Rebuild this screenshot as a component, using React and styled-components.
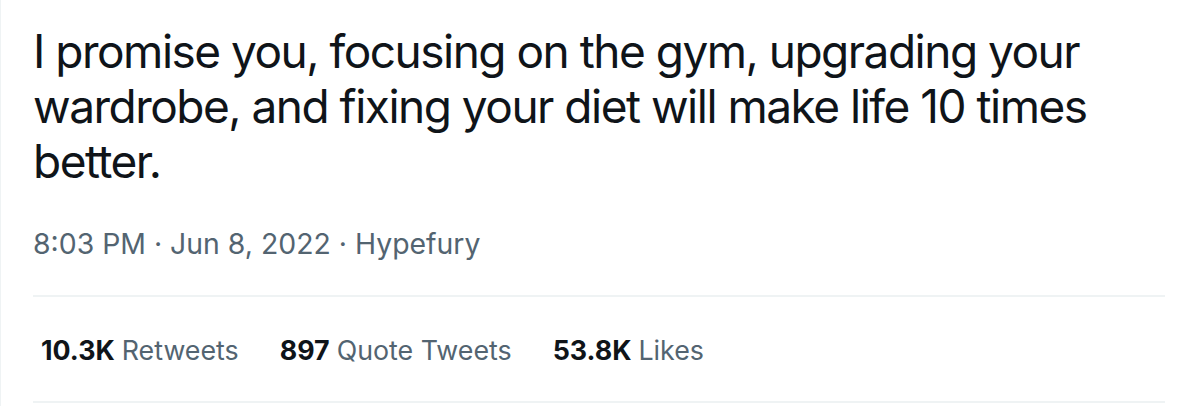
import React from "react";
import styled, { createGlobalStyle } from "styled-components";

const Global = createGlobalStyle`
  html, body { margin: 0; padding: 0; background: #ffffff; }
  body { font-family: Inter, "Noto Sans", "Liberation Sans", sans-serif; -webkit-font-smoothing: antialiased; }
`;

const Card = styled.article`
  box-sizing: border-box;
  width: 1190px;
  height: 406px;
  padding: 24px 25px 0 32px;
  border-left: 1px solid #eff3f4;
  background: #ffffff;
  overflow: hidden;
`;

const TweetText = styled.p`
  margin: 0;
  font-size: 46px;
  line-height: 55px;
  letter-spacing: -1.5px;
  color: #0f1419;
  font-weight: 400;
`;

const Meta = styled.div`
  margin-top: 38px;
  padding-bottom: 34px;
  font-size: 28.4px;
  line-height: 34px;
  color: #536471;
  border-bottom: 2px solid #eff3f4;
`;

const Stats = styled.div`
  display: flex;
  align-items: flex-start;
  gap: 41px;
  box-sizing: border-box;
  height: 106px;
  padding: 37px 0 0 8px;
  border-bottom: 2px solid #eff3f4;
`;

const Stat = styled.span`
  font-size: 26.8px;
  line-height: 33px;
  color: #536471;
`;

const Count = styled.b`
  font-weight: 700;
  color: #0f1419;
  margin-right: 7px;
`;

const stats = [
  { count: "10.3K", label: "Retweets" },
  { count: "897", label: "Quote Tweets" },
  { count: "53.8K", label: "Likes" },
];

export default function App() {
  return (
    <>
      <Global />
      <Card>
        <TweetText>
          I promise you, focusing on the gym, upgrading your wardrobe, and fixing your diet will make life 10 times better.
        </TweetText>
        <Meta>8:03 PM · Jun 8, 2022 · Hypefury</Meta>
        <Stats>
          {stats.map((s) => (
            <Stat key={s.label}>
              <Count>{s.count}</Count>
              {s.label}
            </Stat>
          ))}
        </Stats>
      </Card>
    </>
  );
}
